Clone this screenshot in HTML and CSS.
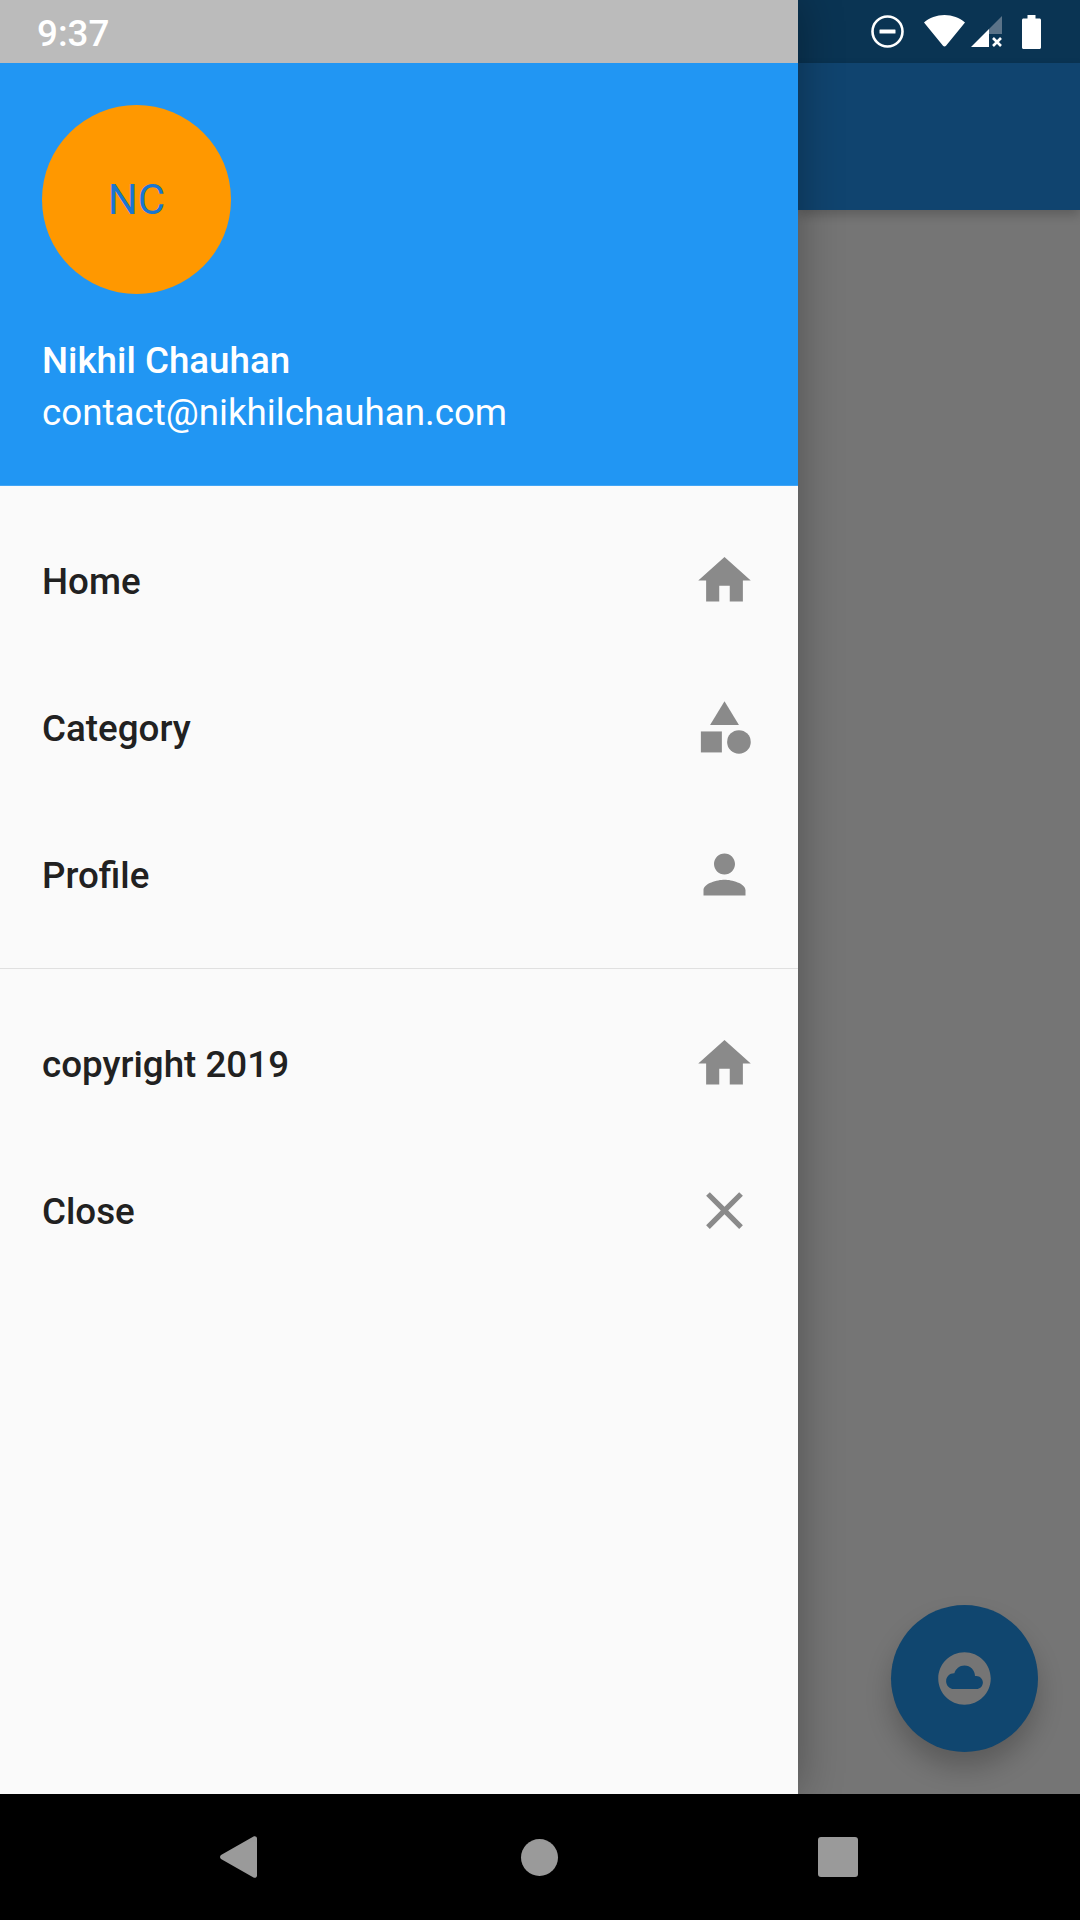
FILE: index.html
```html
<!DOCTYPE html>
<html lang="en">
<head>
    <meta charset="UTF-8">
    <meta name="viewport" content="width=device-width, initial-scale=1.0">
    <title>Drawer</title>

    <link rel="stylesheet" href="styles.css">
</head>
<body>
    <div class="screen">
        <div class="drawer">
            <div class="status status_light">
                <span class="status__time">9:37</span>
            </div>
            <div class="profile">
                <div class="profile__avatar">NC</div>
                <div class="profile__name">Nikhil Chauhan</div>
                <div class="profile__email">contact@nikhilchauhan.com</div>
            </div>
            <div class="menu menu_top">
                <div class="menu__item">
                    <span>Home</span>
                    <svg class="menu__icon" viewBox="0 0 24 24"><path d="M10 20v-6h4v6h5v-8h3L12 3 2 12h3v8z"/></svg>
                </div>
                <div class="menu__item">
                    <span>Category</span>
                    <svg class="menu__icon" viewBox="0 0 24 24"><path d="M12 2l-5.5 9h11z"/><circle cx="17.5" cy="17.5" r="4.5"/><path d="M3 13.5h8v8H3z"/></svg>
                </div>
                <div class="menu__item">
                    <span>Profile</span>
                    <svg class="menu__icon" viewBox="0 0 24 24"><path d="M12 12c2.21 0 4-1.79 4-4s-1.79-4-4-4-4 1.79-4 4 1.79 4 4 4zm0 2c-2.67 0-8 1.34-8 4v2h16v-2c0-2.66-5.33-4-8-4z"/></svg>
                </div>
            </div>
            <div class="menu">
                <div class="menu__item">
                    <span>copyright 2019</span>
                    <svg class="menu__icon" viewBox="0 0 24 24"><path d="M10 20v-6h4v6h5v-8h3L12 3 2 12h3v8z"/></svg>
                </div>
                <div class="menu__item">
                    <span>Close</span>
                    <svg class="menu__icon" viewBox="0 0 24 24"><path d="M19 6.41L17.59 5 12 10.59 6.41 5 5 6.41 10.59 12 5 17.59 6.41 19 12 13.41 17.59 19 19 17.59 13.41 12z"/></svg>
                </div>
            </div>
        </div>

        <div class="backdrop">
            <div class="status status_dark">
                <svg class="status__icon" width="33" height="33" viewBox="0 0 33 33">
                    <circle cx="16.5" cy="16.5" r="15" fill="none" stroke="#fff" stroke-width="2.6"/>
                    <rect x="8.5" y="14.5" width="16" height="4" rx="0.5" fill="#fff"/>
                </svg>
                <svg class="status__icon status__icon_wifi" width="41" height="32" viewBox="0 0 41 32">
                    <path d="M0 7.5C5.5 2.8 12.6 0 20.5 0S35.500 2.800 41 7.500L22 30.800c-.8 1-2.200 1-3 0z" fill="#fff"/>
                </svg>
                <svg class="status__icon status__icon_signal" width="31" height="31" viewBox="0 0 31 31">
                    <path d="M31 0v18h-13V13z" fill="#5b7388"/>
                    <path d="M18 13v18H0z" fill="#fff"/>
                    <path d="M22 22l8 8M30 22l-8 8" stroke="#fff" stroke-width="2.600" fill="none"/>
                </svg>
                <svg class="status__icon status__icon_battery" width="19" height="34" viewBox="0 0 19 34">
                    <path d="M5.500 0h8v3.500h4c.8 0 1.500.7 1.500 1.500v27.500c0 .8-.7 1.500-1.500 1.500h-16C.7 34 0 33.300 0 32.500V5c0-.8.7-1.500 1.500-1.500h4z" fill="#fff"/>
                </svg>
            </div>
            <div class="appbar"></div>
            <div class="backdrop__body"></div>
            <div class="fab">
                <svg class="fab__icon" viewBox="0 0 24 24"><path d="M12 2C6.480 2 2 6.480 2 12s4.480 10 10 10 10-4.480 10-10S17.520 2 12 2zm4.500 14H8c-1.660 0-3-1.340-3-3s1.340-3 3-3l.14.01C8.580 8.280 10.130 7 12 7c2.210 0 4 1.790 4 4h.5c1.380 0 2.500 1.120 2.500 2.500S17.880 16 16.500 16z"/></svg>
            </div>
        </div>
    </div>

    <div class="navbar">
        <svg class="navbar__icon" width="37" height="42" viewBox="0 0 37 42"><path d="M1 19L33.500.6c1.400-.8 3.500 0 3.500 2v36.800c0 2-2.100 2.800-3.500 2L1 23c-1.300-1-1.300-3 0-4z" fill="#9a9a9a"/></svg>
        <div class="navbar__home"></div>
        <div class="navbar__recent"></div>
    </div>
</body>
</html>
```

FILE: styles.css
```css
* {
    box-sizing: border-box;
}

body {
    margin: 0;
    width: 1080px;
    height: 1920px;
    display: flex;
    flex-direction: column;
    font-family: Roboto, "Liberation Sans", sans-serif;
    background: #000;
    overflow: hidden;
}

.screen {
    height: 1794px;
    display: flex;
}

.drawer {
    width: 798px;
    display: flex;
    flex-direction: column;
    background: #fafafa;
    box-shadow: 0 0 42px rgba(0, 0, 0, 0.32);
    position: relative;
    z-index: 2;
}

.status {
    height: 63px;
    display: flex;
    align-items: center;
    flex-shrink: 0;
}

.status_light {
    background: #bbbbbb;
    padding: 3px 0 0 37px;
}

.status_dark {
    background: #0a3453;
    padding-right: 39px;
    justify-content: flex-end;
}

.status__time {
    color: #fff;
    font-size: 36.75px;
    font-weight: 500;
}

.status__icon {
    display: block;
    margin-left: 20px;
}

.status__icon_wifi {
    margin-left: 20px;
    margin-bottom: 2px;
}

.status__icon_signal {
    margin-left: 6px;
}

.status__icon_battery {
    margin-left: 20px;
}

.profile {
    height: 423px;
    padding: 42px 42px 0;
    background: #2196f3;
    border-bottom: 1px solid #42a5f5;
    color: #fff;
    font-size: 36.75px;
}

.profile__avatar {
    width: 189px;
    height: 189px;
    margin-bottom: 41px;
    border-radius: 50%;
    background: #ff9800;
    color: #1976d2;
    font-size: 42px;
    display: flex;
    align-items: center;
    justify-content: center;
}

.profile__name {
    font-weight: 500;
    line-height: 52px;
}

.profile__email {
    line-height: 52px;
}

.menu {
    padding: 21px 0;
}

.menu_top {
    padding-bottom: 20px;
    border-bottom: 1px solid #e0e0e0;
}

.menu__item {
    height: 147px;
    padding: 2px 42px 0;
    display: flex;
    align-items: center;
    justify-content: space-between;
    color: #212121;
    font-size: 36.75px;
    font-weight: 500;
}

.menu__icon {
    width: 63px;
    height: 63px;
    margin-top: -2px;
    fill: #8a8a8a;
}

.backdrop {
    flex: 1;
    display: flex;
    flex-direction: column;
    background: #757575;
    position: relative;
}

.appbar {
    height: 147px;
    background: #10446f;
    box-shadow: 0 5px 10px rgba(0, 0, 0, 0.2);
    flex-shrink: 0;
}

.backdrop__body {
    flex: 1;
}

.fab {
    position: absolute;
    left: 93px;
    top: 1605px;
    width: 147px;
    height: 147px;
    border-radius: 50%;
    background: #10466f;
    box-shadow: 0 16px 26px rgba(0, 0, 0, 0.22);
    display: flex;
    align-items: center;
    justify-content: center;
}

.fab__icon {
    width: 63px;
    height: 63px;
    fill: #757575;
}

.navbar {
    height: 126px;
    background: #000;
    display: flex;
    align-items: center;
}

.navbar__icon {
    display: block;
    margin-left: 220px;
}

.navbar__home {
    width: 37px;
    height: 37px;
    margin-left: 264px;
    border-radius: 50%;
    background: #9a9a9a;
}

.navbar__recent {
    width: 40px;
    height: 40px;
    margin-left: 260px;
    border-radius: 3px;
    background: #9a9a9a;
}
```
